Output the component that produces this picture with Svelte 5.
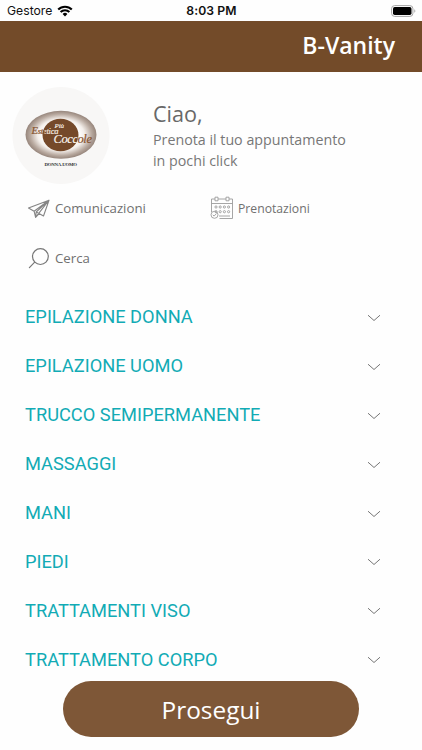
<script>
  const categories = [
    'EPILAZIONE DONNA',
    'EPILAZIONE UOMO',
    'TRUCCO SEMIPERMANENTE',
    'MASSAGGI',
    'MANI',
    'PIEDI',
    'TRATTAMENTI VISO',
    'TRATTAMENTO CORPO'
  ]
</script>

<div class="screen">
  <div class="status">
    <div class="carrier">
      <span>Gestore</span>
      <svg class="wifi" viewBox="0 0 16 12" width="16" height="12">
        <path d="M1.2 4.6a9.6 9.6 0 0 1 13.6 0M3.6 7.1a6.2 6.2 0 0 1 8.8 0" fill="none" stroke="#000" stroke-width="2.1"/>
        <path d="M8 11.4 5.6 9a3.4 3.4 0 0 1 4.8 0z"/>
      </svg>
    </div>
    <span class="time">8:03 PM</span>
    <svg class="battery" viewBox="0 0 25 12" width="25" height="12">
      <rect x=".6" y=".6" width="21.3" height="10.8" rx="3" fill="none" stroke="#a5a5a5"/>
      <rect x="2" y="2" width="18.5" height="8" rx="1.7"/>
      <path d="M23.3 4.2v3.6c1.4-.6 1.4-3 0-3.6" fill="#a5a5a5"/>
    </svg>
  </div>

  <header>B-Vanity</header>

  <section class="profile">
    <svg class="avatar" viewBox="0 0 98 98" width="98" height="98">
      <defs>
        <radialGradient id="halo">
          <stop offset="50%" stop-color="#fff"/>
          <stop offset="66%" stop-color="#f3eeea"/>
          <stop offset="86%" stop-color="#b9aaa0"/>
          <stop offset="100%" stop-color="#96857b"/>
        </radialGradient>
        <linearGradient id="name" gradientUnits="userSpaceOnUse" x1="19" y1="0" x2="80" y2="0">
          <stop offset="21%" stop-color="#85532f"/>
          <stop offset="23%" stop-color="#f3eae3"/>
          <stop offset="75%" stop-color="#fff"/>
          <stop offset="77%" stop-color="#85532f"/>
        </linearGradient>
      </defs>
      <circle cx="49" cy="48.5" r="48.5" fill="#f8f7f6"/>
      <ellipse cx="49" cy="47.8" rx="35.5" ry="24" fill="url(#halo)"/>
      <ellipse cx="48.5" cy="48" rx="18" ry="16.3" fill="#75492a"/>
      <g class="script" fill="url(#name)" stroke="url(#name)" stroke-width=".2">
        <text x="42.5" y="41" font-size="7" textLength="9.5">Più</text>
        <text x="19.5" y="47.3" font-size="8.6" textLength="27"><tspan font-size="10.5">E</tspan>stetica</text>
        <text x="41.5" y="56.3" font-size="12.5" textLength="38.5">Coccole</text>
      </g>
      <text class="tagline" x="32.5" y="78.7" textLength="32.5">DONNA-UOMO</text>
    </svg>
    <div class="greeting">
      <h1>Ciao,</h1>
      <p>Prenota il tuo appuntamento<br>in pochi click</p>
    </div>
  </section>

  <nav>
    <a class="link">
      <svg viewBox="0 0 24 24" width="24" height="24" fill="none" stroke="#858585" stroke-width="1.1" stroke-linejoin="round">
        <path d="M22 4.2 1.5 12l5.6 3.2zM22 4.2 9.2 16l7.3 4zM7.1 15.2l1.5 6.2L22 4.2M9.2 16l-.6 5.4 3.5-3.8"/>
      </svg>
      <span>Comunicazioni</span>
    </a>
    <a class="link bookings">
      <svg viewBox="0 0 24 24" width="24" height="24" fill="none" stroke="#9c9c9c" stroke-width=".9">
        <path d="M5 3H1.5v13M8 3h8M19 3h3.5v19.5h-13M1.5 7.5h21M5 1.2h3v3.6H5zM16 1.2h3v3.6h-3z"/>
        <circle cx="4.5" cy="18.8" r="3.5"/>
        <path d="m2.8 18.8 1.3 1.3 2.4-2.6M9 20h11"/>
        {#each [11, 15.7] as y}
          {#each [6, 10.2, 14.4, 18.6] as x}
            <circle cx={x} cy={y} r="1.1"/>
          {/each}
        {/each}
      </svg>
      <span>Prenotazioni</span>
    </a>
    <a class="link">
      <svg viewBox="0 0 24 24" width="24" height="24" fill="none" stroke="#777" stroke-width="1.2" stroke-linecap="round">
        <circle cx="13.4" cy="10.6" r="7.9"/>
        <path d="m7.7 16.2-5.3 5.4"/>
      </svg>
      <span>Cerca</span>
    </a>
  </nav>

  <ul>
    {#each categories as name}
      <li>
        <span>{name}</span>
        <svg viewBox="0 0 14 10" width="14" height="10">
          <path d="M1 3.2 7 8.5l6-5.3" fill="none" stroke="#777" stroke-width="1"/>
        </svg>
      </li>
    {/each}
  </ul>

  <footer>
    <button>Prosegui</button>
  </footer>
</div>

<style>
  :global(body) {
    margin: 0;
    background: #fefefe;
  }

  .screen {
    width: 422px;
    height: 750px;
    overflow: hidden;
    display: flex;
    flex-direction: column;
    font-family: "Open Sans", sans-serif;
    color: #686868;
  }

  .status {
    height: 21px;
    flex: none;
    box-sizing: border-box;
    padding: 0 6px 0 7px;
    display: grid;
    grid-template-columns: 1fr auto 1fr;
    align-items: center;
    font: 12.2px/21px Inter, sans-serif;
    color: #111;
  }

  .carrier {
    display: flex;
    align-items: center;
    gap: 5px;
  }

  .time {
    font-weight: 600;
    letter-spacing: 0.1px;
  }

  .battery { justify-self: end; }

  header {
    height: 50.5px;
    flex: none;
    box-sizing: border-box;
    padding-right: 27px;
    background: #734b29;
    color: #fff;
    font-size: 23px;
    font-weight: 600;
    line-height: 49px;
    text-align: right;
  }

  .profile {
    height: 98px;
    flex: none;
    margin-top: 15px;
    padding-left: 12px;
    display: flex;
    gap: 43px;
  }

  .script {
    font-family: "Liberation Serif", serif;
    font-style: italic;
  }

  .tagline {
    font: bold 4.8px "Liberation Serif", serif;
    fill: #333;
  }

  h1 {
    margin: 12px 0 0;
    font-size: 21.6px;
    font-weight: 400;
    line-height: 30px;
  }

  p {
    margin: 0;
    font-size: 14.25px;
    line-height: 21px;
    color: #777;
    white-space: nowrap;
  }

  nav {
    flex: none;
    margin-top: -1.5px;
    display: grid;
    grid-template-columns: 183px 1fr;
    grid-auto-rows: 50px;
    padding-left: 27px;
  }

  .link {
    display: flex;
    align-items: center;
    gap: 4px;
    font-size: 13.25px;
    color: #707070;
  }

  .bookings { font-size: 12.2px; }

  ul {
    margin: 9.5px 0 0;
    padding: 0 41px 0 25px;
    list-style: none;
  }

  li {
    height: 48.9px;
    display: flex;
    align-items: center;
    justify-content: space-between;
    font: 18.25px Roboto, sans-serif;
    color: #12abb5;
  }

  footer {
    flex: none;
    margin-top: -2.5px;
    display: flex;
    justify-content: center;
  }

  button {
    width: 296px;
    height: 56px;
    padding: 0;
    border: 0;
    border-radius: 28px;
    background: #7e5737;
    color: #fff;
    font: 24.4px "Open Sans", sans-serif;
  }
</style>
